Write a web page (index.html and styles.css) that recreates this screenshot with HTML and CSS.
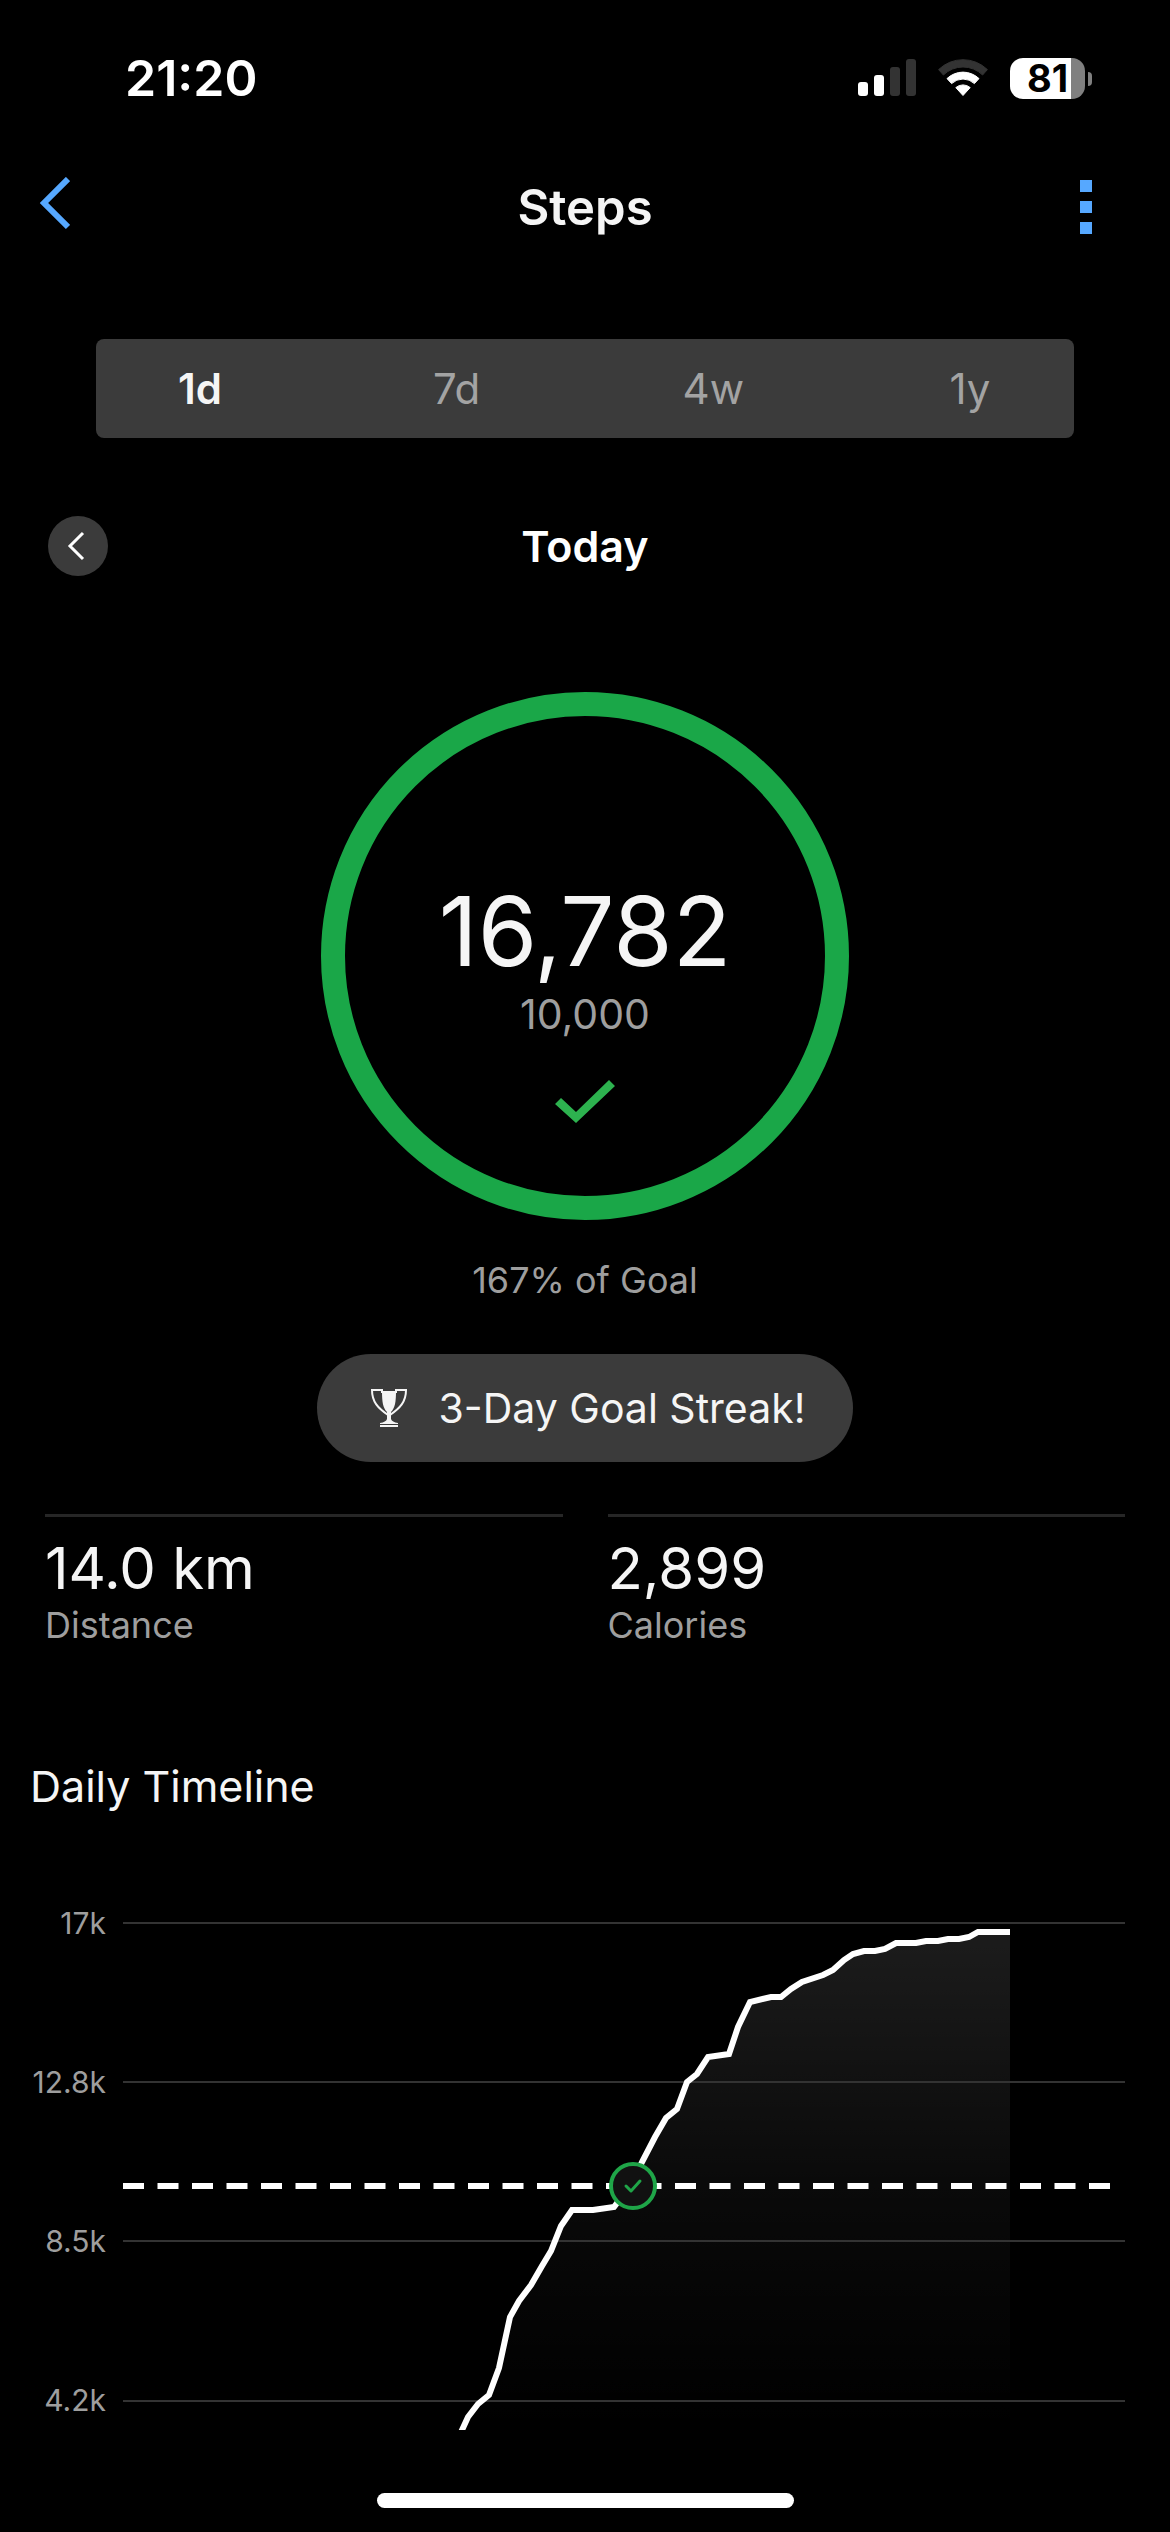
FILE: index.html
```
<!DOCTYPE html>
<html lang="en">
<head>
  <meta charset="UTF-8">
  <meta name="viewport" content="width=device-width, initial-scale=1">
  <title>Steps</title>
  <link rel="stylesheet" href="styles.css">
</head>
<body>
  <div class="status-bar">
    <span class="time">21:20</span>
    <div class="status-icons">
      <svg class="signal" width="58" height="38" viewBox="0 0 58 38" aria-hidden="true">
        <rect x="0" y="23" width="10" height="14" rx="3" fill="#fff"/>
        <rect x="16" y="16" width="10" height="21" rx="3" fill="#fff"/>
        <rect x="32" y="8" width="10" height="29" rx="3" fill="#333"/>
        <rect x="48" y="0" width="10" height="37" rx="3" fill="#333"/>
      </svg>
      <svg class="wifi" width="50" height="38" viewBox="0 0 50 38" aria-hidden="true">
        <path d="M0.6 10.6 A35 35 0 0 1 49.4 10.6 L44.6 16 A28 28 0 0 0 5.4 16 Z" fill="#333" stroke="#333" stroke-linejoin="round"/>
        <path d="M9 19.6 A23 23 0 0 1 41 19.6 L36.4 24.6 A16.5 16.5 0 0 0 13.6 24.6 Z" fill="#fff" stroke="#fff" stroke-linejoin="round"/>
        <path d="M17.8 28.6 A11 11 0 0 1 32.2 28.6 L25 36.5 Z" fill="#fff" stroke="#fff" stroke-linejoin="round"/>
      </svg>
      <div class="battery"><span class="battery-level">81</span></div>
    </div>
  </div>

  <header class="nav">
    <button class="icon-btn" aria-label="Back">
      <svg width="32" height="60" viewBox="0 0 32 60"><path d="M30 2 L6 26 L30 50" fill="none" stroke="#56a8ff" stroke-width="6"/></svg>
    </button>
    <h1>Steps</h1>
    <button class="icon-btn more" aria-label="More options"><i></i><i></i><i></i></button>
  </header>

  <main>
    <div class="tabs" role="tablist">
      <button class="tab active" role="tab" aria-selected="true">1d</button>
      <button class="tab" role="tab" aria-selected="false">7d</button>
      <button class="tab" role="tab" aria-selected="false">4w</button>
      <button class="tab" role="tab" aria-selected="false">1y</button>
    </div>

    <div class="date-row">
      <button class="prev" aria-label="Previous day">
        <svg width="60" height="60" viewBox="0 0 60 60"><path d="M35 17 L22 30 L35 43" fill="none" stroke="#fff" stroke-width="3"/></svg>
      </button>
      <h2>Today</h2>
    </div>

    <section class="goal">
      <div class="ring">
        <span class="steps">16,782</span>
        <span class="target">10,000</span>
        <svg class="check" width="60" height="44" viewBox="0 0 60 44" aria-hidden="true"><path d="M0 24 L6 18 L21 32 L54 0 L60 6 L21 43 Z" fill="#2db24f"/></svg>
      </div>
      <p class="percent">167% of Goal</p>
      <div class="streak">
        <svg width="36" height="40" viewBox="0 0 36 40" aria-hidden="true">
          <path d="M11 3 H25 C25 14 24 20 20 24 V31 Q21 34 27 35 V36 H9 V35 Q15 34 16 31 V24 C12 20 11 14 11 3 Z" fill="#f5f5f5"/>
          <path d="M11 5 V2 H1 C1 14 7 20 17 27 M25 5 V2 H35 C35 14 29 20 19 27" fill="none" stroke="#f5f5f5" stroke-width="2"/>
          <path d="M9 38 H27" stroke="#f5f5f5" stroke-width="2"/>
        </svg>
        <span>3-Day Goal Streak!</span>
      </div>
    </section>

    <section class="stats">
      <div class="stat">
        <span class="value">14.0 km</span>
        <span class="label">Distance</span>
      </div>
      <div class="stat">
        <span class="value">2,899</span>
        <span class="label">Calories</span>
      </div>
    </section>

    <h3>Daily Timeline</h3>
    <svg class="chart" viewBox="0 0 1170 538" role="img" aria-label="Steps through the day">
      <defs>
        <linearGradient id="area" x1="0" y1="0" x2="0" y2="1">
          <stop offset="0" stop-color="#fff" stop-opacity="0.11"/>
          <stop offset="0.5" stop-color="#fff" stop-opacity="0.04"/>
          <stop offset="1" stop-color="#fff" stop-opacity="0"/>
        </linearGradient>
      </defs>

      <path d="M462 538 L468 525 L478 512 L489 503 L499 476 L510 425 L519 409 L531 393 L542 374 L551 359 L561 334 L572 318 H593 L614 315 L633 290 L642 270 L655 245 L666 226 L677 217 L687 190 L697 182 L708 165 L729 162 L738 135 L750 110 L771 105 H781 L791 97 L802 90 L823 83 L833 78 L844 68 L853 62 L864 59 H875 L885 57 L896 51 H916 L926 49 H938 L948 47 H959 L969 45 L978 40 H1010 V538 Z" fill="url(#area)"/>

      <g class="grid">
        <path d="M123 31 H1125 M123 190 H1125 M123 349 H1125 M123 509 H1125"/>
      </g>
      <g class="axis">
        <text x="106" y="42">17k</text>
        <text x="106" y="201">12.8k</text>
        <text x="106" y="360">8.5k</text>
        <text x="106" y="519">4.2k</text>
      </g>

      <path class="goal-line" d="M123 294 H1110"/>
      <path class="line" d="M457 549 L468 525 L478 512 L489 503 L499 476 L510 425 L519 409 L531 393 L542 374 L551 359 L561 334 L572 318 H593 L614 315 L633 290 L642 270 L655 245 L666 226 L677 217 L687 190 L697 182 L708 165 L729 162 L738 135 L750 110 L771 105 H781 L791 97 L802 90 L823 83 L833 78 L844 68 L853 62 L864 59 H875 L885 57 L896 51 H916 L926 49 H938 L948 47 H959 L969 45 L978 40 H1010"/>

      <circle cx="633" cy="294" r="22" fill="#111" stroke="#1fa548" stroke-width="4"/>
      <path d="M626 294 L631 299 L640 289" fill="none" stroke="#1fa548" stroke-width="3" stroke-linecap="round" stroke-linejoin="round"/>
    </svg>
  </main>

  <div class="home-bar"></div>
</body>
</html>
```
FILE: styles.css
```
* {
  box-sizing: border-box;
}
body {
  margin: 0;
  background: #000;
  color: #f5f5f5;
  font-family: Inter, 'Liberation Sans', sans-serif;
}
button {
  padding: 0;
  border: none;
  background: none;
  color: inherit;
  font: inherit;
  cursor: pointer;
}
svg {
  display: block;
}
h1, h2, h3, p {
  margin: 0;
}

/* status bar */
.status-bar {
  display: flex;
  justify-content: space-between;
  align-items: center;
  height: 156px;
  padding: 0 78px 0 125px;
  color: #fff;
}
.time {
  font-size: 50px;
  font-weight: 600;
}
.status-icons {
  display: flex;
  align-items: center;
  gap: 22px;
}
.battery {
  position: relative;
  width: 75px;
  height: 41px;
  margin-right: 7px;
  border-radius: 13px;
  background: linear-gradient(to right, #fff 61px, #808080 61px);
  text-align: center;
}
.battery::after {
  content: "";
  position: absolute;
  top: 14px;
  right: -7px;
  width: 4px;
  height: 14px;
  border-radius: 0 4px 4px 0;
  background: #808080;
}
.battery-level {
  color: #000;
  font-size: 38px;
  font-weight: 700;
  line-height: 41px;
}

/* header */
.nav {
  display: flex;
  justify-content: space-between;
  align-items: center;
  height: 102px;
  padding: 0 38px;
}
.nav h1 {
  font-size: 49px;
  font-weight: 600;
}
.icon-btn {
  display: flex;
  align-items: center;
  width: 92px;
  height: 72px;
}
.more {
  flex-direction: column;
  justify-content: center;
  gap: 9px;
}
.more i {
  width: 12px;
  height: 12px;
  background: #56a8ff;
}

.tabs {
  display: flex;
  justify-content: space-between;
  margin: 81px 96px 78px;
  padding: 0 60px;
  border-radius: 8px;
  background: #3b3b3b;
}
.tab {
  width: 88px;
  height: 99px;
  color: #a3a3a3;
  font-size: 42px;
}
.tab.active {
  color: #f5f5f5;
  font-weight: 600;
}

.date-row {
  display: grid;
  grid-template-columns: 60px 1fr 60px;
  align-items: center;
  padding: 0 48px;
}
.date-row h2 {
  color: #fff;
  font-size: 43px;
  font-weight: 600;
  text-align: center;
}
.prev {
  border-radius: 50%;
  background: #3b3b3b;
}

/* goal ring */
.goal {
  display: flex;
  flex-direction: column;
  align-items: center;
  margin-top: 116px;
}
.ring {
  display: flex;
  flex-direction: column;
  align-items: center;
  width: 528px;
  height: 528px;
  padding-top: 167px;
  border: 24px solid #1aa748;
  border-radius: 50%;
}
.steps {
  font-size: 96px;
  line-height: 96px;
}
.target {
  margin-top: 13px;
  color: #9e9e9e;
  font-size: 41px;
  line-height: 44px;
}
.check {
  margin-top: 44px;
}
.percent {
  margin-top: 38px;
  color: #9e9e9e;
  font-size: 36px;
  line-height: 44px;
}
.streak {
  display: flex;
  align-items: center;
  gap: 32px;
  height: 108px;
  margin-top: 52px;
  padding: 0 48px 0 54px;
  border-radius: 54px;
  background: #3b3b3b;
  font-size: 41px;
}

/* totals */
.stats {
  display: grid;
  grid-template-columns: 1fr 1fr;
  gap: 45px;
  margin: 52px 45px 0;
}
.stat {
  display: flex;
  flex-direction: column;
  gap: 5px;
  padding-top: 21px;
  border-top: 3px solid #262626;
}
.value {
  font-size: 58px;
  line-height: 60px;
}
.label {
  color: #9e9e9e;
  font-size: 36px;
  line-height: 44px;
}

/* timeline */
h3 {
  margin: 113px 30px 80px;
  font-size: 43px;
  font-weight: 400;
  line-height: 52px;
}
.chart {
  width: 100%;
  overflow: hidden;
}
.grid path {
  stroke: #333;
  stroke-width: 2;
}
.axis text {
  fill: #9e9e9e;
  font-size: 30px;
  text-anchor: end;
}
.goal-line {
  stroke: #fff;
  stroke-width: 6;
  stroke-dasharray: 21 13.5;
}
.line {
  fill: none;
  stroke: #fff;
  stroke-width: 6;
}
.home-bar {
  width: 417px;
  height: 15px;
  margin: 63px auto 24px;
  border-radius: 8px;
  background: #fff;
}
```
